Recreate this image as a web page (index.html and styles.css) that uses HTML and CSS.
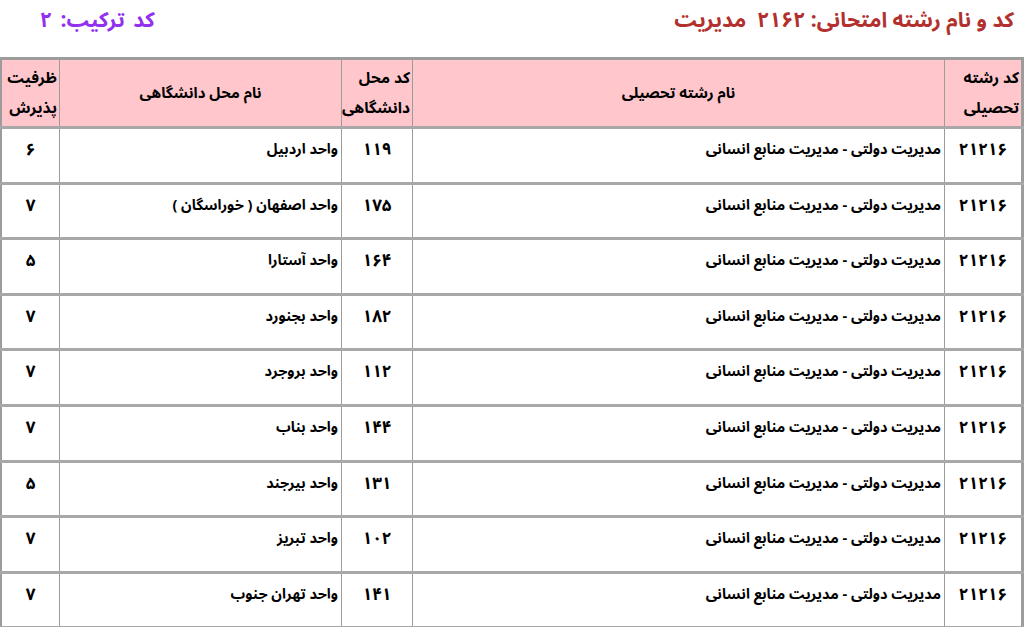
FILE: index.html
```html
<!DOCTYPE html>
<html lang="fa" dir="rtl">
<head>
<meta charset="utf-8">
<title>کد و نام رشته امتحانی</title>
<link rel="stylesheet" href="styles.css">
</head>
<body>
<div class="page">
  <div class="top">
    <div class="title">کد و نام رشته امتحانی: <span class="num">۲۱۶۲</span>&nbsp; مدیریت</div>
    <div class="combo">کد ترکیب: ۲</div>
  </div>
  <table class="grid">
    <colgroup>
      <col class="c-code"><col class="c-field"><col class="c-uc"><col class="c-uname"><col class="c-cap">
    </colgroup>
    <thead>
      <tr>
        <th class="r"><span class="ln">کد رشته</span><span class="ln">تحصیلی</span></th>
        <th class="big">نام رشته تحصیلی</th>
        <th class="r"><span class="ln">کد محل</span><span class="ln">دانشگاهی</span></th>
        <th class="big">نام محل دانشگاهی</th>
        <th class="r"><span class="ln">ظرفیت</span><span class="ln">پذیرش</span></th>
      </tr>
    </thead>
    <tbody>
      <tr><td class="n">۲۱۲۱۶</td><td>مدیریت دولتی - مدیریت منابع انسانی</td><td class="n">۱۱۹</td><td>واحد اردبیل</td><td class="n">۶</td></tr>
      <tr><td class="n">۲۱۲۱۶</td><td>مدیریت دولتی - مدیریت منابع انسانی</td><td class="n">۱۷۵</td><td>واحد اصفهان ( خوراسگان )</td><td class="n">۷</td></tr>
      <tr><td class="n">۲۱۲۱۶</td><td>مدیریت دولتی - مدیریت منابع انسانی</td><td class="n">۱۶۴</td><td>واحد آستارا</td><td class="n">۵</td></tr>
      <tr><td class="n">۲۱۲۱۶</td><td>مدیریت دولتی - مدیریت منابع انسانی</td><td class="n">۱۸۲</td><td>واحد بجنورد</td><td class="n">۷</td></tr>
      <tr><td class="n">۲۱۲۱۶</td><td>مدیریت دولتی - مدیریت منابع انسانی</td><td class="n">۱۱۲</td><td>واحد بروجرد</td><td class="n">۷</td></tr>
      <tr><td class="n">۲۱۲۱۶</td><td>مدیریت دولتی - مدیریت منابع انسانی</td><td class="n">۱۴۴</td><td>واحد بناب</td><td class="n">۷</td></tr>
      <tr><td class="n">۲۱۲۱۶</td><td>مدیریت دولتی - مدیریت منابع انسانی</td><td class="n">۱۳۱</td><td>واحد بیرجند</td><td class="n">۵</td></tr>
      <tr><td class="n">۲۱۲۱۶</td><td>مدیریت دولتی - مدیریت منابع انسانی</td><td class="n">۱۰۲</td><td>واحد تبریز</td><td class="n">۷</td></tr>
      <tr><td class="n">۲۱۲۱۶</td><td>مدیریت دولتی - مدیریت منابع انسانی</td><td class="n">۱۴۱</td><td>واحد تهران جنوب</td><td class="n">۷</td></tr>
    </tbody>
  </table>
</div>
</body>
</html>
```

FILE: styles.css
```css
html, body {
  margin: 0;
  padding: 0;
  background: #ffffff;
}
body {
  font-family: "Noto Sans Arabic", "DejaVu Sans", "Noto Sans", sans-serif;
  font-weight: bold;
  color: #000;
}
.page {
  padding: 0 3px 0 2px;
}
.top {
  display: flex;
  justify-content: space-between;
  align-items: center;
  height: 40px;
  padding: 0 10px 0 38px;
  margin-bottom: 17px;
  line-height: 30px;
}
.title {
  color: #b2302d;
  font-size: 21px;
}
.title .num {
  letter-spacing: 3px;
}
.combo {
  color: #9331f0;
  font-size: 21px;
  word-spacing: 3px;
}
.grid {
  width: 1022px;
  border-collapse: collapse;
  table-layout: fixed;
  border: 3px solid #9c9c9c;
}
.c-code { width: 78px; }
.c-field { width: 532px; }
.c-uc { width: 71px; }
.c-uname { width: 282px; }
.c-cap { width: 59px; }
.grid th {
  background: #ffc7cc;
  height: 66px;
  font-size: 15px;
  line-height: 30px;
  text-align: center;
  vertical-align: middle;
  border-left: 1px solid #9c9c9c;
  border-right: 1px solid #9c9c9c;
  border-bottom: 3px solid #a8a8a8;
  padding: 0 2px;
}
.grid th .ln {
  display: block;
  height: 30px;
  line-height: 30px;
  font-size: 15.5px;
}
.grid th.r {
  text-align: right;
}
.grid td {
  height: 55.6px;
  font-size: 14.5px;
  line-height: 20px;
  text-align: right;
  vertical-align: top;
  padding: 11px 3px 0 3px;
  border-left: 1px solid #9c9c9c;
  border-right: 1px solid #9c9c9c;
  border-bottom: 3px solid #a8a8a8;
  box-sizing: border-box;
}
.grid td.n {
  text-align: center;
  font-size: 17px;
  letter-spacing: 4px;
}
```
